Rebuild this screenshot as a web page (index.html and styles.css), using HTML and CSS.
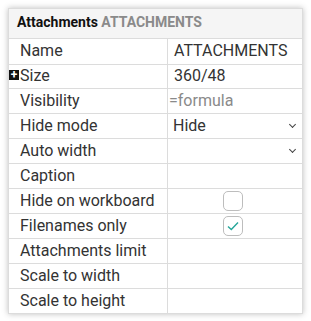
FILE: index.html
```html
<!DOCTYPE html>
<html lang="en">
<head>
    <meta charset="UTF-8">
    <title>Attachments properties</title>
    <link rel="stylesheet" href="styles.css">
</head>
<body>
    <div class="panel">
        <div class="panel-head">
            <span class="title">Attachments</span>
            <span class="subtitle">ATTACHMENTS</span>
        </div>
        <table class="props">
            <tr>
                <td class="key">Name</td>
                <td class="val">ATTACHMENTS</td>
            </tr>
            <tr class="short">
                <td class="key"><span class="expand">+</span>Size</td>
                <td class="val">360/48</td>
            </tr>
            <tr>
                <td class="key">Visibility</td>
                <td class="val formula">=formula</td>
            </tr>
            <tr>
                <td class="key">Hide mode</td>
                <td class="val select">Hide<span class="chev"></span></td>
            </tr>
            <tr>
                <td class="key">Auto width</td>
                <td class="val select"><span class="chev"></span></td>
            </tr>
            <tr>
                <td class="key">Caption</td>
                <td class="val"></td>
            </tr>
            <tr>
                <td class="key">Hide on workboard</td>
                <td class="val center"><span class="check"></span></td>
            </tr>
            <tr>
                <td class="key">Filenames only</td>
                <td class="val center">
                    <span class="check">
                        <svg width="12" height="10" viewBox="0 0 12 10"><path d="M1 5.5 L4.3 8.5 L11 1.5" fill="none" stroke="#26a69a" stroke-width="1.4"/></svg>
                    </span>
                </td>
            </tr>
            <tr>
                <td class="key">Attachments limit</td>
                <td class="val"></td>
            </tr>
            <tr>
                <td class="key">Scale to width</td>
                <td class="val"></td>
            </tr>
            <tr>
                <td class="key">Scale to height</td>
                <td class="val"></td>
            </tr>
        </table>
    </div>
</body>
</html>
```

FILE: styles.css
```css
body {
    margin: 0;
    padding: 8px;
    background-color: #fff;
    font-family: Roboto, "Liberation Sans", sans-serif;
}
.panel {
    width: 295px;
    box-sizing: border-box;
    border: 1px solid #dcdcdc;
    background-color: #fff;
    box-shadow: 0 0 6px rgba(0, 0, 0, 0.25);
}
.panel-head {
    height: 29px;
    line-height: 27px;
    padding-left: 8px;
    background-color: #f5f5f5;
    border-bottom: 1px solid #dcdcdc;
    font-size: 14px;
    font-weight: bold;
}
.title {
    color: #111;
}
.subtitle {
    color: #8a8a8a;
}
.props {
    width: 100%;
    border-collapse: collapse;
    font-size: 16px;
    line-height: 20px;
    color: #333;
}
.props tr {
    height: 25px;
}
.props tr.short {
    height: 24px;
}
.props td {
    border-top: 1px solid #dcdcdc;
    padding: 0;
    white-space: nowrap;
}
.props tr:first-child td {
    border-top: none;
    height: 24px;
}
.key {
    width: 147px;
    padding-left: 11px !important;
    border-right: 1px solid #dcdcdc;
    position: relative;
}
.val {
    padding-left: 6px !important;
    position: relative;
}
.formula {
    padding-left: 1px !important;
    color: #8a8a8a;
}
.select {
    padding-left: 5px !important;
}
.chev {
    position: absolute;
    right: 7px;
    top: 8px;
    width: 4px;
    height: 4px;
    border-right: 1.5px solid #444;
    border-bottom: 1.5px solid #444;
    transform: rotate(45deg);
}
.center {
    text-align: center;
    padding-right: 10px !important;
}
.check {
    display: inline-flex;
    align-items: center;
    justify-content: center;
    width: 18px;
    height: 18px;
    border: 1px solid #bdbdbd;
    border-radius: 5px;
    vertical-align: middle;
}
.expand {
    position: absolute;
    left: 0;
    top: 5px;
    width: 10px;
    height: 10px;
    background-color: #111;
    color: #fff;
    font-size: 12px;
    font-weight: bold;
    line-height: 10px;
    text-align: center;
}
```
